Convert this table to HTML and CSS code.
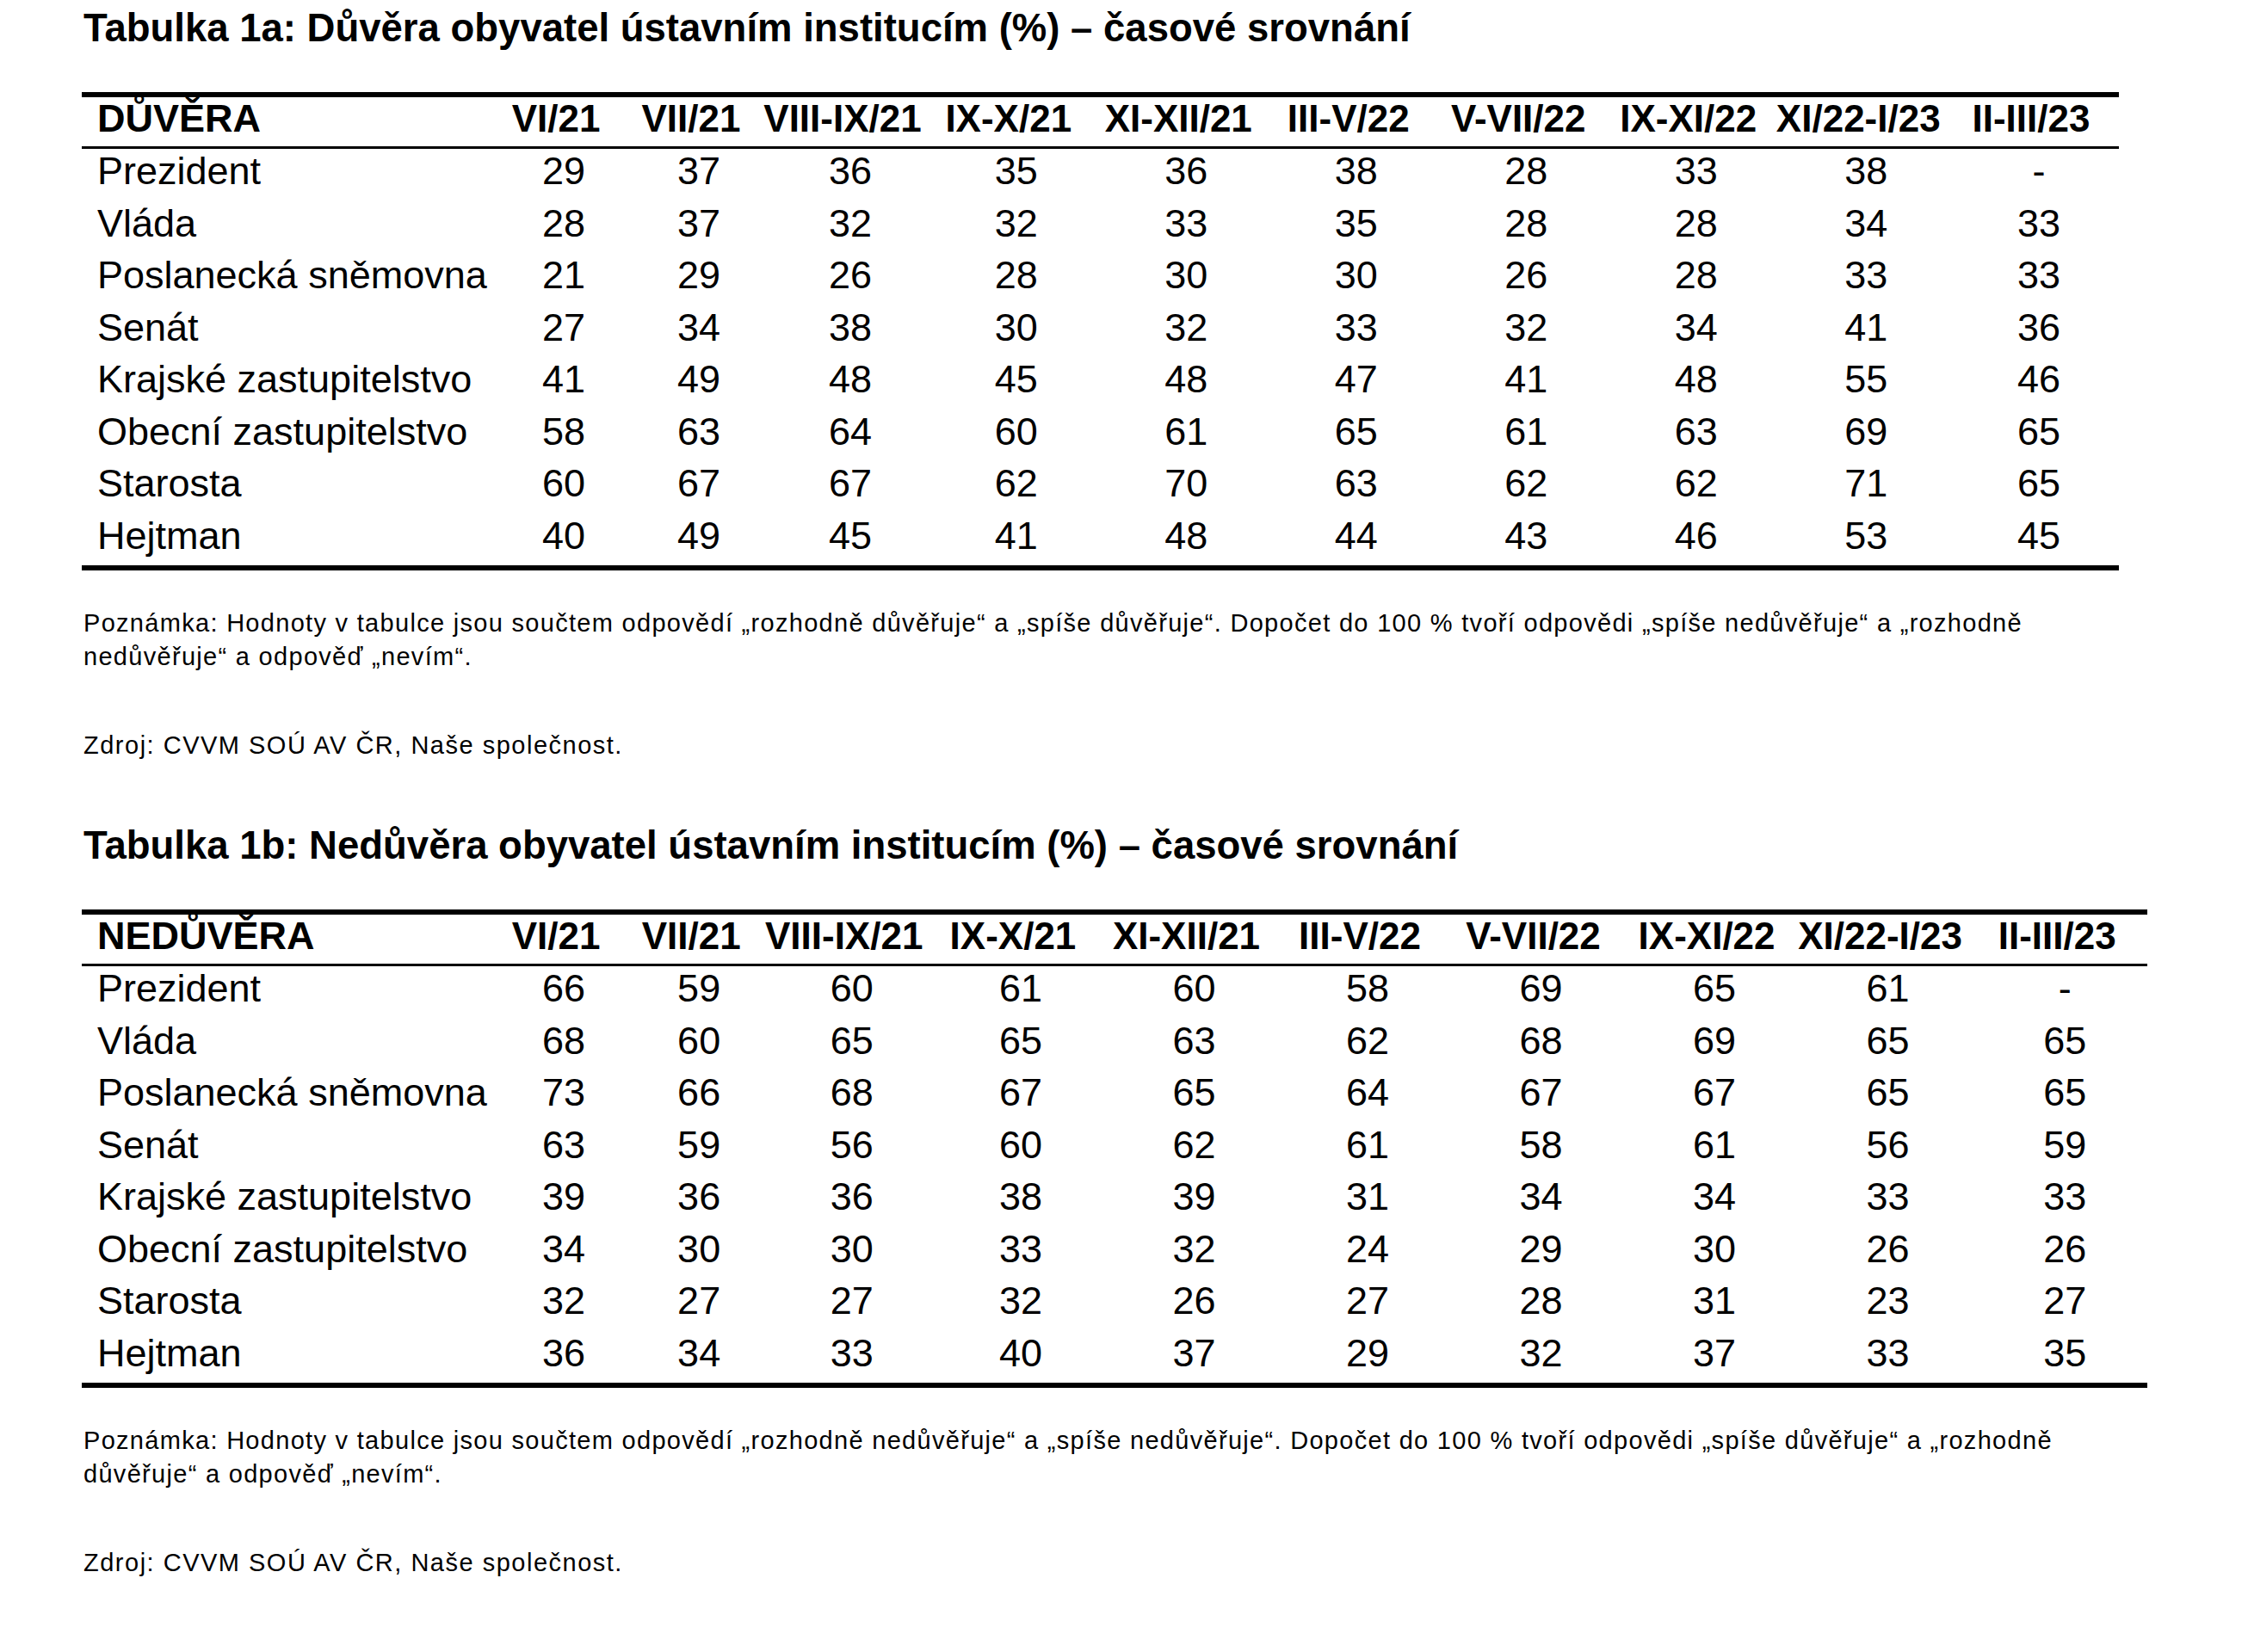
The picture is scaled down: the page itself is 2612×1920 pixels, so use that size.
FILE: index.html
```html
<!DOCTYPE html>
<html lang="cs">
<head>
    <meta charset="UTF-8">
    <title>Důvěra obyvatel ústavním institucím</title>
    <link rel="stylesheet" href="styles.css">
</head>
<body>
    <div class="page">

        <!-- Tabulka 1a -->
        <div class="table-title">Tabulka 1a: Důvěra obyvatel ústavním institucím (%) – časové srovnání</div>
        <table class="data trust">
            <colgroup>
                <col class="c-label"><col class="c-vi"><col class="c-vii"><col class="c-viii">
                <col class="c-mid"><col class="c-mid"><col class="c-mid"><col class="c-mid"><col class="c-mid"><col class="c-mid">
                <col class="c-last">
            </colgroup>
            <thead>
                <tr>
                    <th class="label">DŮVĚRA</th>
                    <th>VI/21</th><th>VII/21</th><th>VIII-IX/21</th><th>IX-X/21</th><th>XI-XII/21</th>
                    <th>III-V/22</th><th>V-VII/22</th><th>IX-XI/22</th><th>XI/22-I/23</th><th>II-III/23</th>
                </tr>
            </thead>
            <tbody>
                <tr><td class="label">Prezident</td><td>29</td><td>37</td><td>36</td><td>35</td><td>36</td><td>38</td><td>28</td><td>33</td><td>38</td><td>-</td></tr>
                <tr><td class="label">Vláda</td><td>28</td><td>37</td><td>32</td><td>32</td><td>33</td><td>35</td><td>28</td><td>28</td><td>34</td><td>33</td></tr>
                <tr><td class="label">Poslanecká sněmovna</td><td>21</td><td>29</td><td>26</td><td>28</td><td>30</td><td>30</td><td>26</td><td>28</td><td>33</td><td>33</td></tr>
                <tr><td class="label">Senát</td><td>27</td><td>34</td><td>38</td><td>30</td><td>32</td><td>33</td><td>32</td><td>34</td><td>41</td><td>36</td></tr>
                <tr><td class="label">Krajské zastupitelstvo</td><td>41</td><td>49</td><td>48</td><td>45</td><td>48</td><td>47</td><td>41</td><td>48</td><td>55</td><td>46</td></tr>
                <tr><td class="label">Obecní zastupitelstvo</td><td>58</td><td>63</td><td>64</td><td>60</td><td>61</td><td>65</td><td>61</td><td>63</td><td>69</td><td>65</td></tr>
                <tr><td class="label">Starosta</td><td>60</td><td>67</td><td>67</td><td>62</td><td>70</td><td>63</td><td>62</td><td>62</td><td>71</td><td>65</td></tr>
                <tr><td class="label">Hejtman</td><td>40</td><td>49</td><td>45</td><td>41</td><td>48</td><td>44</td><td>43</td><td>46</td><td>53</td><td>45</td></tr>
            </tbody>
        </table>
        <p class="note">Poznámka: Hodnoty v tabulce jsou součtem odpovědí „rozhodně důvěřuje“ a „spíše důvěřuje“. Dopočet do 100 % tvoří odpovědi „spíše nedůvěřuje“ a „rozhodně<br>nedůvěřuje“ a odpověď „nevím“.</p>
        <p class="source">Zdroj: CVVM SOÚ AV ČR, Naše společnost.</p>

        <!-- Tabulka 1b -->
        <div class="table-title next">Tabulka 1b: Nedůvěra obyvatel ústavním institucím (%) – časové srovnání</div>
        <table class="data distrust">
            <colgroup>
                <col class="c-label"><col class="c-vi"><col class="c-vii"><col class="c-viii">
                <col class="c-mid"><col class="c-mid"><col class="c-mid"><col class="c-mid"><col class="c-mid"><col class="c-mid">
                <col class="c-last">
            </colgroup>
            <thead>
                <tr>
                    <th class="label">NEDŮVĚRA</th>
                    <th>VI/21</th><th>VII/21</th><th>VIII-IX/21</th><th>IX-X/21</th><th>XI-XII/21</th>
                    <th>III-V/22</th><th>V-VII/22</th><th>IX-XI/22</th><th>XI/22-I/23</th><th>II-III/23</th>
                </tr>
            </thead>
            <tbody>
                <tr><td class="label">Prezident</td><td>66</td><td>59</td><td>60</td><td>61</td><td>60</td><td>58</td><td>69</td><td>65</td><td>61</td><td>-</td></tr>
                <tr><td class="label">Vláda</td><td>68</td><td>60</td><td>65</td><td>65</td><td>63</td><td>62</td><td>68</td><td>69</td><td>65</td><td>65</td></tr>
                <tr><td class="label">Poslanecká sněmovna</td><td>73</td><td>66</td><td>68</td><td>67</td><td>65</td><td>64</td><td>67</td><td>67</td><td>65</td><td>65</td></tr>
                <tr><td class="label">Senát</td><td>63</td><td>59</td><td>56</td><td>60</td><td>62</td><td>61</td><td>58</td><td>61</td><td>56</td><td>59</td></tr>
                <tr><td class="label">Krajské zastupitelstvo</td><td>39</td><td>36</td><td>36</td><td>38</td><td>39</td><td>31</td><td>34</td><td>34</td><td>33</td><td>33</td></tr>
                <tr><td class="label">Obecní zastupitelstvo</td><td>34</td><td>30</td><td>30</td><td>33</td><td>32</td><td>24</td><td>29</td><td>30</td><td>26</td><td>26</td></tr>
                <tr><td class="label">Starosta</td><td>32</td><td>27</td><td>27</td><td>32</td><td>26</td><td>27</td><td>28</td><td>31</td><td>23</td><td>27</td></tr>
                <tr><td class="label">Hejtman</td><td>36</td><td>34</td><td>33</td><td>40</td><td>37</td><td>29</td><td>32</td><td>37</td><td>33</td><td>35</td></tr>
            </tbody>
        </table>
        <p class="note">Poznámka: Hodnoty v tabulce jsou součtem odpovědí „rozhodně nedůvěřuje“ a „spíše nedůvěřuje“. Dopočet do 100 % tvoří odpovědi „spíše důvěřuje“ a „rozhodně<br>důvěřuje“ a odpověď „nevím“.</p>
        <p class="source">Zdroj: CVVM SOÚ AV ČR, Naše společnost.</p>

    </div>
</body>
</html>
```

FILE: styles.css
```css
body {
    margin: 0;
    padding: 0;
    background-color: #fff;
    color: #000;
    font-family: "Liberation Sans", Arial, sans-serif;
}

.page {
    padding: 7px 0 0 95px;
}

.table-title {
    font-size: 45.5px;
    font-weight: bold;
    line-height: 52px;
    margin: 0 0 48px 2px;
    white-space: nowrap;
}

.table-title.next {
    margin-top: 71px;
}

/* tables */

.data {
    border-collapse: separate;
    border-spacing: 0;
    table-layout: fixed;
    font-size: 45px;
    border-top: 6px solid #000;
    border-bottom: 6px solid #000;
}

.data.trust {
    width: 2367px;
}

.data.distrust {
    width: 2400px;
}

.data th {
    font-size: 44px;
    font-weight: bold;
    line-height: 50px;
    padding: 0 0 7px;
    text-align: center;
    white-space: nowrap;
    border-bottom: 3px solid #000;
}

.data td {
    line-height: 52.5px;
    padding: 0 0 8px 18px;
    text-align: center;
    white-space: nowrap;
}

.data th.label,
.data td.label {
    text-align: left;
    padding-left: 18px;
}

.data th.label {
    font-size: 45px;
}

.c-label { width: 476px; }
.c-vi { width: 150px; }
.c-vii { width: 164px; }

.trust .c-viii { width: 188px; }
.trust .c-mid { width: 197.5px; }
.trust .c-last { width: 204px; }

.distrust .c-viii { width: 191px; }
.distrust .c-mid { width: 201.5px; }
.distrust .c-last { width: 209.5px; }

/* notes under the tables */

.note,
.source {
    font-size: 29px;
    letter-spacing: 1.3px;
    line-height: 39px;
    margin: 42px 0 0 2px;
    white-space: nowrap;
}

.source {
    margin-top: 64px;
    letter-spacing: 1.5px;
}
```
